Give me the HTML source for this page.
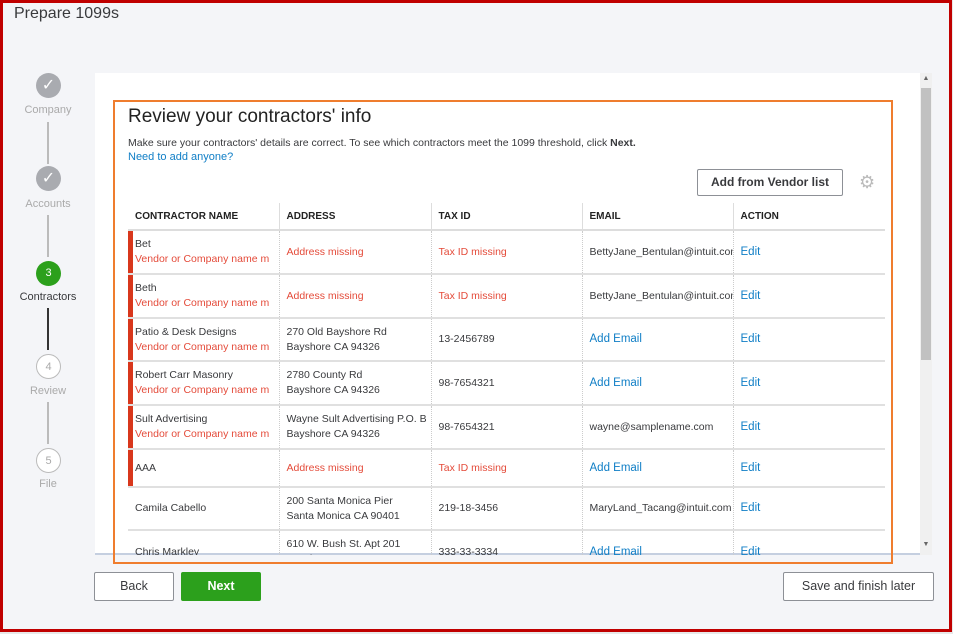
<!DOCTYPE html>
<html><head><style>
*{box-sizing:border-box;margin:0;padding:0}
body{width:953px;height:634px;position:relative;overflow:hidden;font-family:"Liberation Sans",sans-serif;background:#e8e8e8}
.frame{position:absolute;left:0;top:0;width:952px;height:632px;border:3px solid #c00000;background:#f4f5f8}
.abs{position:absolute}
.title{left:14px;top:5px;font-size:16px;color:#393a3d}
.step{position:absolute;left:36px;width:25px;height:25px;border-radius:50%;text-align:center;color:#fff;font-size:11px;line-height:25px}
.lbl{position:absolute;width:96px;left:0;text-align:center;font-size:11px;color:#aaa}
.vl{position:absolute;left:47px;width:2px;background:#bbb}
.panel{left:95px;top:73px;width:837px;height:482px;background:#fff;overflow:hidden}
.orange{left:113px;top:100px;width:780px;height:464px;border:2px solid #ef7d2e}
table{border-collapse:collapse;table-layout:fixed;position:absolute;left:128px;top:203px;width:757px;font-size:10.5px;color:#393a3d}
td,th{padding:0 7px;text-align:left;vertical-align:middle;white-space:nowrap;overflow:hidden;border-left:1px dotted #ccc}
td:first-child,th:first-child{border-left:none}
th{height:27px;font-size:10px;font-weight:bold;color:#222;border-left:1px solid #ddd;border-bottom:2px solid #ddd}
td{border-bottom:2px solid #e0e0e0;line-height:15px}
.r{color:#e44b3a}.b{color:#0f7ec6;font-size:11.5px}
.bar td:first-child{box-shadow:inset 5px 0 0 #d8371c}
.btn{position:absolute;border:1px solid #8d9096;background:#fff;border-radius:2px;text-align:center;font-size:12.5px;color:#393a3d}
</style></head><body>
<div class="frame"></div>
<div class="abs title">Prepare 1099s</div>
<div class="vl" style="top:122px;height:42px"></div>
<div class="vl" style="top:215px;height:42px"></div>
<div class="vl" style="top:308px;height:42px;background:#333"></div>
<div class="vl" style="top:402px;height:42px"></div>
<div class="step" style="top:73px;background:#a9abb0;font-size:16px">✓</div>
<div class="lbl" style="top:104px">Company</div>
<div class="step" style="top:166px;background:#a9abb0;font-size:16px">✓</div>
<div class="lbl" style="top:198px">Accounts</div>
<div class="step" style="top:261px;background:#2ca01c">3</div>
<div class="lbl" style="top:291px;color:#393a3d">Contractors</div>
<div class="step" style="top:354px;background:#fff;border:1.5px solid #bbb;color:#aaa">4</div>
<div class="lbl" style="top:385px">Review</div>
<div class="step" style="top:448px;background:#fff;border:1.5px solid #bbb;color:#aaa">5</div>
<div class="lbl" style="top:478px">File</div>
<div class="abs panel">
<div class="abs" style="right:0;top:0;width:12px;height:482px;background:#f0f0f0"></div>
<div class="abs" style="right:1px;top:15px;width:10px;height:272px;background:#c1c1c1"></div>
<div class="abs" style="right:0;top:2px;width:12px;font-size:7px;color:#666;text-align:center">▲</div>
<div class="abs" style="right:0;top:468px;width:12px;font-size:7px;color:#666;text-align:center">▼</div>
<div class="abs" style="left:0;bottom:0;width:825px;height:2px;background:#c5cfe0"></div>
</div>
<div class="abs" style="left:128px;top:106px;font-size:19px;color:#222">Review your contractors' info</div>
<div class="abs" style="left:128px;top:137px;font-size:10.5px;color:#393a3d">Make sure your contractors' details are correct. To see which contractors meet the 1099 threshold, click <b>Next.</b></div>
<div class="abs" style="left:128px;top:151px;font-size:11px;color:#0f7ec6">Need to add anyone?</div>
<div class="btn" style="left:697px;top:169px;width:146px;height:27px;line-height:25px;font-weight:bold;font-size:12px">Add from Vendor list</div>
<div class="abs" style="left:859px;top:173px;font-size:18px;color:#bbb;line-height:18px">⚙</div>
<div class="abs" style="left:95px;top:200px;width:830px;height:355px;overflow:hidden"><div style="position:absolute;left:-95px;top:-200px;width:953px;height:634px">
<table>
<colgroup><col style="width:151px"><col style="width:152px"><col style="width:151px"><col style="width:151px"><col style="width:152px"></colgroup>
<tr><th>CONTRACTOR NAME</th><th>ADDRESS</th><th>TAX ID</th><th>EMAIL</th><th>ACTION</th></tr>
<tr class="bar" style="height:44px"><td>Bet<br><span class="r">Vendor or Company name m</span></td><td class="r">Address missing</td><td class="r">Tax ID missing</td><td>BettyJane_Bentulan@intuit.com</td><td class="b">Edit</td></tr>
<tr class="bar" style="height:44px"><td>Beth<br><span class="r">Vendor or Company name m</span></td><td class="r">Address missing</td><td class="r">Tax ID missing</td><td>BettyJane_Bentulan@intuit.com</td><td class="b">Edit</td></tr>
<tr class="bar" style="height:43px"><td>Patio &amp; Desk Designs<br><span class="r">Vendor or Company name m</span></td><td>270 Old Bayshore Rd<br>Bayshore CA 94326</td><td>13-2456789</td><td class="b">Add Email</td><td class="b">Edit</td></tr>
<tr class="bar" style="height:44px"><td>Robert Carr Masonry<br><span class="r">Vendor or Company name m</span></td><td>2780 County Rd<br>Bayshore CA 94326</td><td>98-7654321</td><td class="b">Add Email</td><td class="b">Edit</td></tr>
<tr class="bar" style="height:44px"><td>Sult Advertising<br><span class="r">Vendor or Company name m</span></td><td>Wayne Sult Advertising P.O. B<br>Bayshore CA 94326</td><td>98-7654321</td><td>wayne@samplename.com</td><td class="b">Edit</td></tr>
<tr class="bar" style="height:38px"><td>AAA</td><td class="r">Address missing</td><td class="r">Tax ID missing</td><td class="b">Add Email</td><td class="b">Edit</td></tr>
<tr style="height:43px"><td>Camila Cabello</td><td>200 Santa Monica Pier<br>Santa Monica CA 90401</td><td>219-18-3456</td><td>MaryLand_Tacang@intuit.com</td><td class="b">Edit</td></tr>
<tr style="height:44px"><td>Chris Markley</td><td>610 W. Bush St. Apt 201<br>Bayshore</td><td>333-33-3334</td><td class="b">Add Email</td><td class="b">Edit</td></tr>
</table></div></div>
<div class="abs orange"></div>
<div class="btn" style="left:94px;top:572px;width:80px;height:29px;line-height:27px">Back</div>
<div class="btn" style="left:181px;top:572px;width:80px;height:29px;line-height:27px;background:#2ca01c;border-color:#2ca01c;color:#fff;font-weight:bold">Next</div>
<div class="btn" style="left:783px;top:572px;width:151px;height:29px;line-height:27px">Save and finish later</div>
</body></html>
